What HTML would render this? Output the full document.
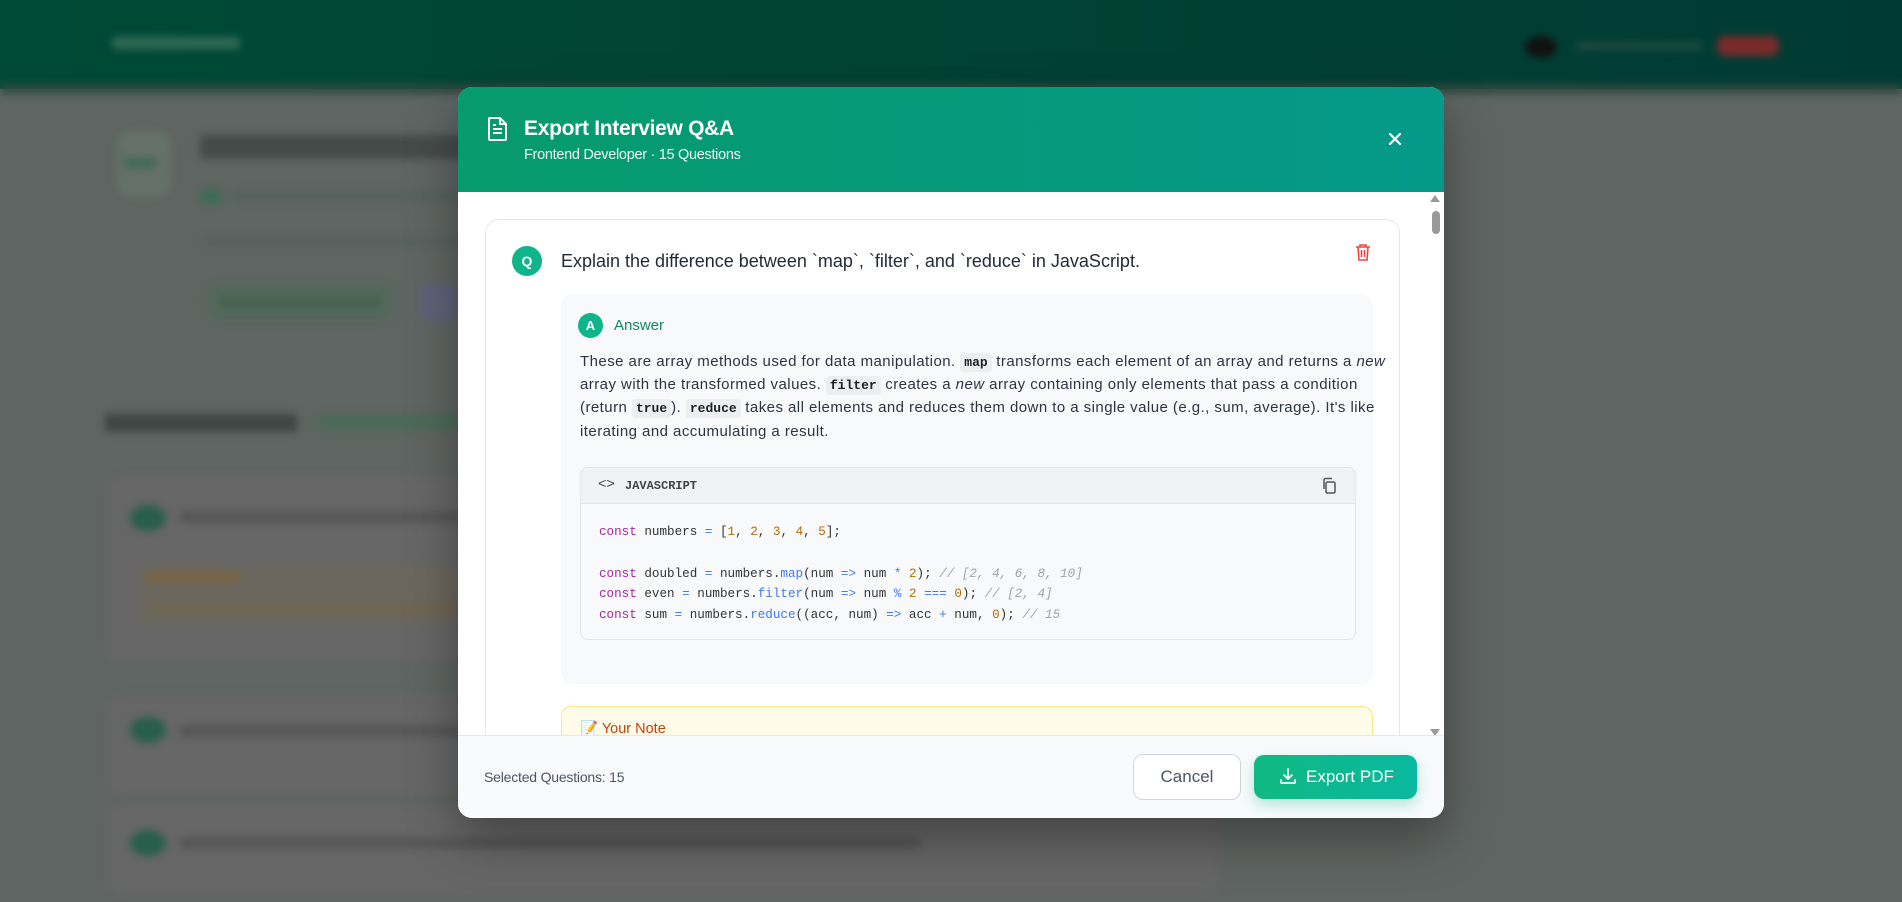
<!DOCTYPE html>
<html><head><meta charset="utf-8"><style>
*{box-sizing:border-box;margin:0;padding:0}
body{width:1902px;height:902px;overflow:hidden;background:#5f6562;font-family:"Liberation Sans",sans-serif;position:relative}
.bg{position:absolute;filter:blur(4px)}
.modal{position:absolute;left:458px;top:87px;width:986px;height:731px;background:#fff;border-radius:14px;overflow:hidden;box-shadow:0 20px 50px rgba(0,0,0,.35)}
.hdr{height:105px;background:linear-gradient(90deg,#069a6c,#05998a);position:relative;color:#fff}
.hdr h1{position:absolute;left:66px;top:30px;font-size:21px;font-weight:bold;letter-spacing:-.3px}
.hdr .sub{position:absolute;left:66px;top:60px;font-size:14.5px;opacity:.92;letter-spacing:-.3px}
.body{position:absolute;top:105px;left:0;right:0;bottom:83px;overflow:hidden;background:#fff}
.card{position:absolute;left:27px;top:27px;width:915px;height:700px;border:1px solid #e5e7eb;border-radius:14px;background:#fff}
.qc{position:absolute;width:30px;height:30px;border-radius:50%;background:#10b48a;color:#fff;font-weight:bold;font-size:14px;text-align:center;line-height:30px}
.qt{position:absolute;left:75px;top:31px;font-size:18px;color:#1f2937;letter-spacing:0}
.ans{position:absolute;left:75px;top:74px;width:812px;height:390px;background:#f8f9fa;border-radius:12px}
.ans p{position:absolute;left:19px;top:57px;width:800px;font-size:15px;line-height:22.2px;color:#2d3340;letter-spacing:.45px;white-space:nowrap}
code.i{font-family:"Liberation Mono",monospace;font-size:13px;background:#eceef0;padding:2px 4px;border-radius:3px;color:#222;font-weight:bold;letter-spacing:0}
.code{position:absolute;left:19px;top:173px;width:776px;height:173px;border:1px solid #e3e5e8;border-radius:8px;background:#f8f9fa;overflow:hidden}
.code .ch{height:36px;background:#f1f2f4;border-bottom:1px solid #e3e5e8;font-family:"Liberation Mono",monospace;font-size:12px;font-weight:bold;color:#444;padding:11px 0 0 44px;position:relative}
.code pre{font-family:"Liberation Mono",monospace;font-size:12.6px;line-height:20.8px;color:#333;padding:18px 0 0 18px}
.k{color:#a626a4}.n{color:#b76b01}.o{color:#4078f2}.c{color:#a0a1a7;font-style:italic}
.note{position:absolute;left:75px;top:486px;width:812px;height:100px;background:#fefbe8;border:1px solid #fde58a;border-radius:10px}
.ftr{position:absolute;left:0;right:0;bottom:0;height:83px;background:#f9fafb;border-top:1px solid #e5e7eb}
</style></head><body>
<div class="bg" style="left:0;top:0;width:1902px;height:89px;background:linear-gradient(90deg,#004a37,#003b33);filter:none"></div>
<div class="bg" style="left:0;top:84px;width:1902px;height:10px;background:#2f4a40"></div>
<div class="bg" style="left:112px;top:37px;width:128px;height:12px;background:#2f6a55;border-radius:4px"></div>
<div class="bg" style="left:1525px;top:36px;width:32px;height:22px;background:#111;border-radius:50%"></div>
<div class="bg" style="left:1575px;top:42px;width:128px;height:8px;background:#1d4a40;border-radius:4px"></div>
<div class="bg" style="left:1717px;top:36px;width:62px;height:20px;background:#7a2a2a;border-radius:8px"></div>
<div class="bg" style="left:117px;top:132px;width:54px;height:64px;background:#65706b;border-radius:8px"></div>
<div class="bg" style="left:124px;top:158px;width:32px;height:10px;background:#3e6a58"></div>
<div class="bg" style="left:200px;top:135px;width:270px;height:24px;background:#454b49;border-radius:4px"></div>
<div class="bg" style="left:200px;top:190px;width:22px;height:14px;background:#3e6a58;border-radius:4px"></div>
<div class="bg" style="left:232px;top:192px;width:230px;height:8px;background:#55605c"></div>
<div class="bg" style="left:205px;top:238px;width:255px;height:8px;background:#57605d"></div>
<div class="bg" style="left:207px;top:284px;width:186px;height:36px;background:#54685c;border-radius:8px"></div>
<div class="bg" style="left:220px;top:296px;width:160px;height:12px;background:#46634f"></div>
<div class="bg" style="left:420px;top:284px;width:40px;height:36px;background:#5d6378;border-radius:8px"></div>
<div class="bg" style="left:105px;top:414px;width:192px;height:18px;background:#404644"></div>
<div class="bg" style="left:317px;top:414px;width:140px;height:16px;background:#4b6a58;border-radius:6px"></div>
<div class="bg" style="left:107px;top:477px;width:1112px;height:184px;background:#666;border-radius:12px"></div>
<div class="bg" style="left:107px;top:696px;width:1112px;height:98px;background:#666;border-radius:12px"></div>
<div class="bg" style="left:107px;top:805px;width:1112px;height:90px;background:#666;border-radius:12px"></div>
<div class="bg" style="left:130px;top:505px;width:36px;height:26px;background:#285e4c;border-radius:50%"></div>
<div class="bg" style="left:180px;top:512px;width:280px;height:10px;background:#555"></div>
<div class="bg" style="left:130px;top:717px;width:36px;height:26px;background:#285e4c;border-radius:50%"></div>
<div class="bg" style="left:180px;top:726px;width:280px;height:10px;background:#555"></div>
<div class="bg" style="left:130px;top:830px;width:36px;height:26px;background:#285e4c;border-radius:50%"></div>
<div class="bg" style="left:180px;top:838px;width:740px;height:10px;background:#555"></div>
<div class="bg" style="left:140px;top:565px;width:330px;height:58px;background:#6b675e"></div>
<div class="bg" style="left:145px;top:572px;width:95px;height:10px;background:#7a6442"></div>
<div class="bg" style="left:150px;top:605px;width:310px;height:7px;background:#72644a"></div>

<div class="modal">
 <div class="hdr">
  <svg style="position:absolute;left:29px;top:29px" width="22" height="26" viewBox="0 0 22 26" fill="none" stroke="#fff" stroke-width="2" stroke-linejoin="round"><path d="M3 2h10l6 6v15a1 1 0 0 1-1 1H3a1 1 0 0 1-1-1V3a1 1 0 0 1 1-1z"/><path d="M13 2v6h6M6 13h9M6 17h9M6 9h3"/></svg>
  <h1>Export Interview Q&amp;A</h1>
  <div class="sub">Frontend Developer · 15 Questions</div>
  <svg style="position:absolute;left:929px;top:44px" width="16" height="16" viewBox="0 0 16 16" stroke="#fff" stroke-width="2.2" stroke-linecap="round"><path d="M3 3l10 10M13 3L3 13"/></svg>
 </div>
 <div class="body">
  <div class="card">
   <div class="qc" style="left:26px;top:26px">Q</div>
   <div class="qt">Explain the difference between `map`, `filter`, and `reduce` in JavaScript.</div>
   <svg style="position:absolute;left:869px;top:23px" width="16" height="18" viewBox="0 0 16 18" fill="none" stroke="#ef4444" stroke-width="1.6"><path d="M1 4h14M5 4V2h6v2M3 4l1 13h8l1-13M6.5 7v7M9.5 7v7"/></svg>
   <div class="ans">
    <div class="qc" style="left:17px;top:19px;width:25px;height:25px;line-height:25px;font-size:13px">A</div>
    <div style="position:absolute;left:53px;top:23px;font-size:15px;color:#0d8a60">Answer</div>
    <p>These are array methods used for data manipulation. <code class="i">map</code> transforms each element of an array and returns a <i>new</i><br>array with the transformed values. <code class="i">filter</code> creates a <i>new</i> array containing only elements that pass a condition<br>(return <code class="i">true</code>). <code class="i">reduce</code> takes all elements and reduces them down to a single value (e.g., sum, average). It's like<br>iterating and accumulating a result.</p>
    <div class="code">
     <div class="ch"><span style="position:absolute;left:17px;top:9px;font-size:14px;font-weight:normal">&lt;&gt;</span>JAVASCRIPT
      <svg style="position:absolute;right:18px;top:9px" width="16" height="18" viewBox="0 0 16 18" fill="none" stroke="#555" stroke-width="1.5"><rect x="5" y="5" width="9" height="11" rx="1.5"/><path d="M3 12V3a1.5 1.5 0 0 1 1.5-1.5H11"/></svg></div>
<pre><span class="k">const</span> numbers <span class="o">=</span> [<span class="n">1</span>, <span class="n">2</span>, <span class="n">3</span>, <span class="n">4</span>, <span class="n">5</span>];

<span class="k">const</span> doubled <span class="o">=</span> numbers.<span class="o">map</span>(num <span class="o">=&gt;</span> num <span class="o">*</span> <span class="n">2</span>); <span class="c">// [2, 4, 6, 8, 10]</span>
<span class="k">const</span> even <span class="o">=</span> numbers.<span class="o">filter</span>(num <span class="o">=&gt;</span> num <span class="o">%</span> <span class="n">2</span> <span class="o">===</span> <span class="n">0</span>); <span class="c">// [2, 4]</span>
<span class="k">const</span> sum <span class="o">=</span> numbers.<span class="o">reduce</span>((acc, num) <span class="o">=&gt;</span> acc <span class="o">+</span> num, <span class="n">0</span>); <span class="c">// 15</span></pre>
    </div>
   </div>
   <div class="note"><div style="position:absolute;left:18px;top:13px;font-size:14.5px;color:#c2410c">📝 Your Note</div></div>
  </div>
  <div style="position:absolute;right:4px;top:3px;width:0;height:0;border-left:5px solid transparent;border-right:5px solid transparent;border-bottom:7px solid #999"></div>
  <div style="position:absolute;right:4px;top:19px;width:8px;height:23px;background:#9a9a9a;border-radius:4px"></div>
  <div style="position:absolute;right:4px;top:537px;width:0;height:0;border-left:5px solid transparent;border-right:5px solid transparent;border-top:7px solid #999"></div>
 </div>
 <div class="ftr">
  <div style="position:absolute;left:26px;top:33px;font-size:14px;color:#4b5563;letter-spacing:-.2px">Selected Questions: 15</div>
  <div style="position:absolute;left:675px;top:18px;width:108px;height:46px;border:1px solid #d1d5db;border-radius:10px;background:#fff;text-align:center;line-height:44px;font-size:17px;color:#4b5563">Cancel</div>
  <div style="position:absolute;left:796px;top:19px;width:163px;height:44px;border-radius:10px;background:linear-gradient(90deg,#10b981,#0ab8a0);color:#fff;font-size:17px;line-height:44px;padding-left:52px;box-shadow:0 6px 14px rgba(16,185,129,.3)">Export PDF
   <svg style="position:absolute;left:26px;top:13px" width="16" height="17" viewBox="0 0 16 17" fill="none" stroke="#fff" stroke-width="1.7" stroke-linecap="round" stroke-linejoin="round"><path d="M8 1v10M4 7l4 4 4-4M1 12v3h14v-3"/></svg></div>
 </div>
</div>
</body></html>
